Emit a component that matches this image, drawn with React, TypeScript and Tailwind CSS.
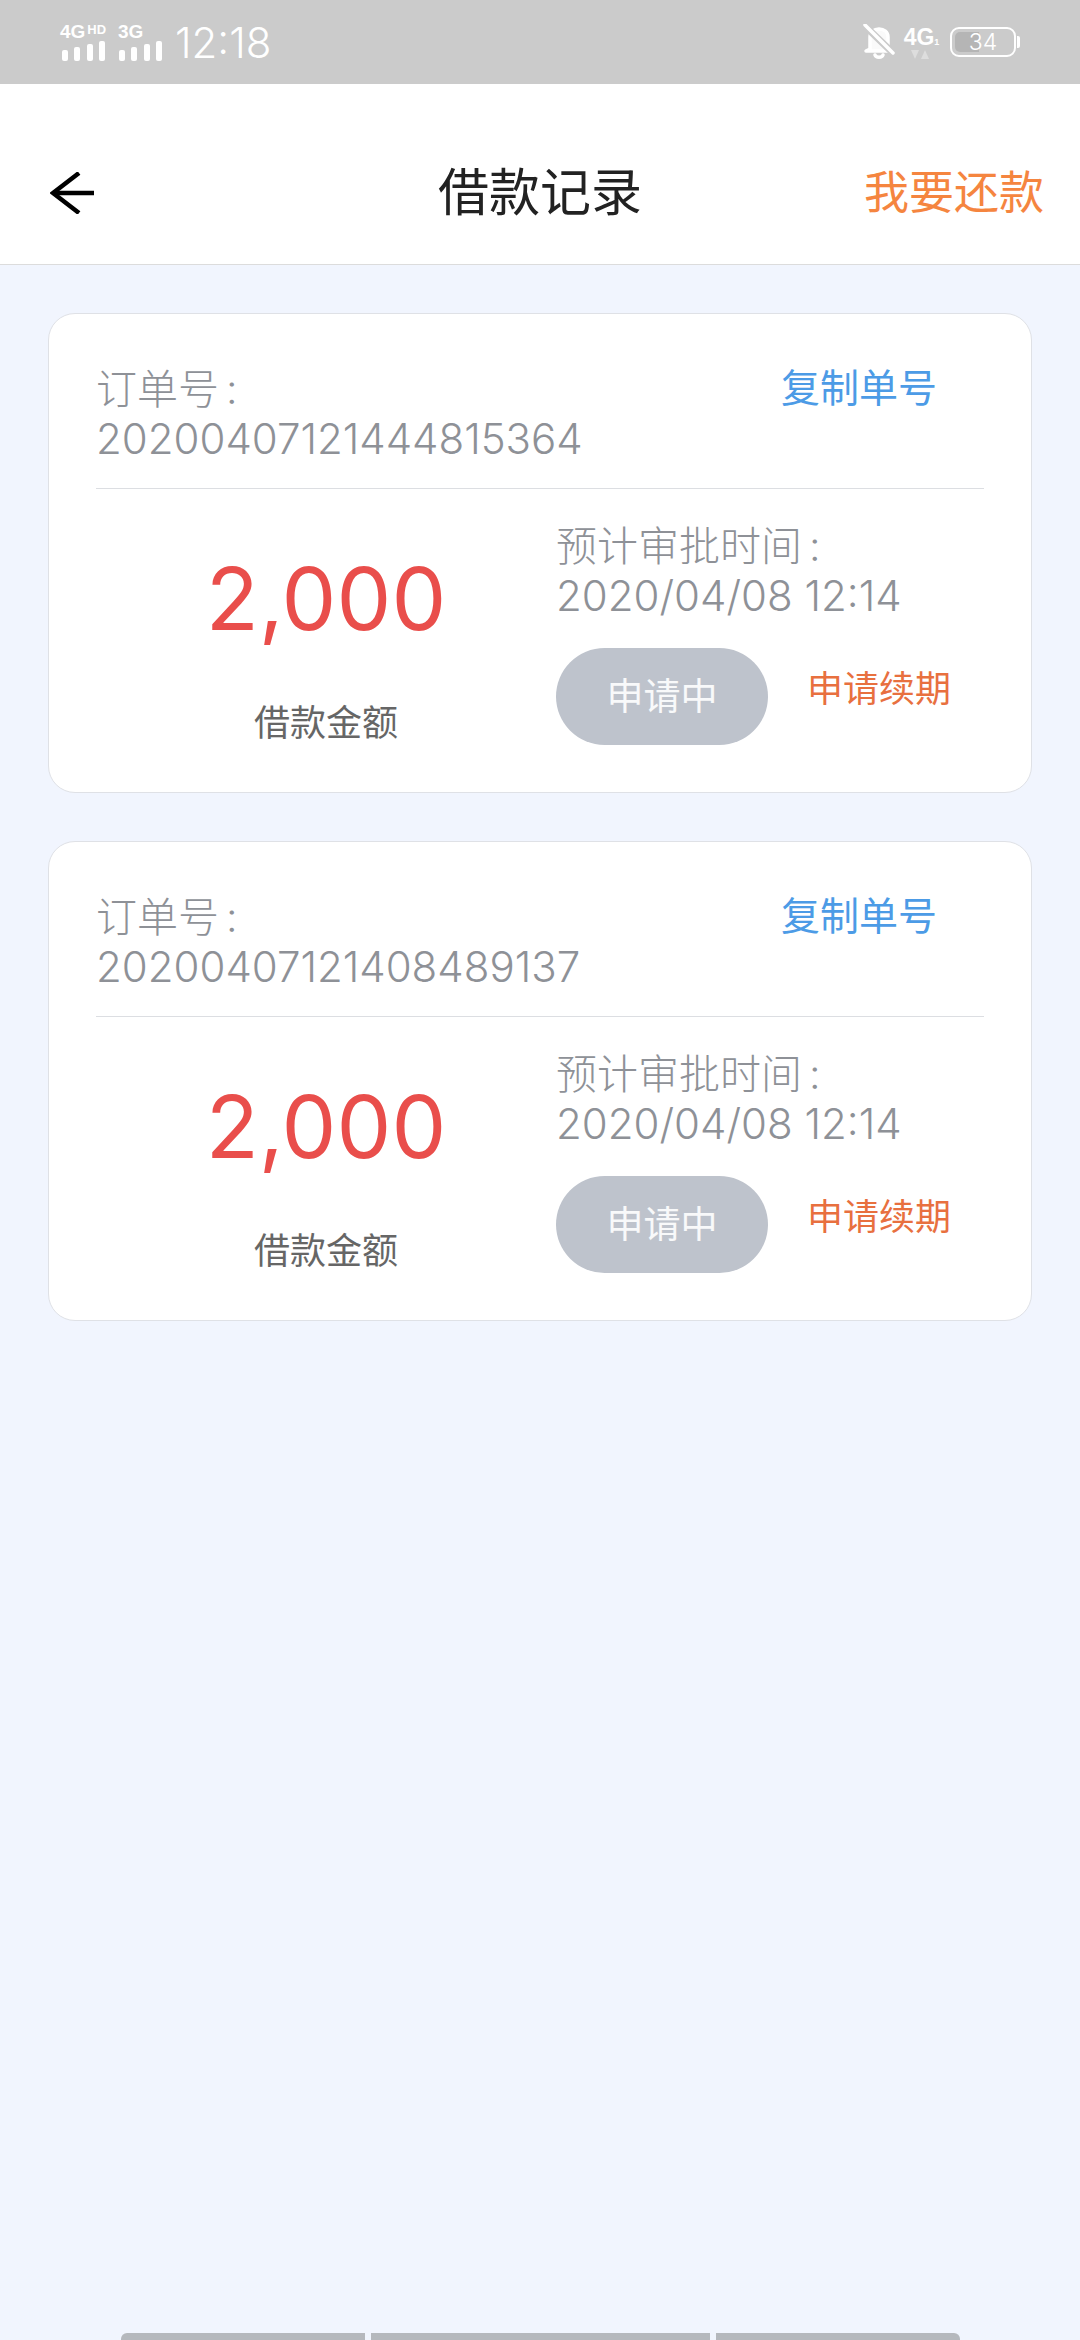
const fontStack = "font-['Inter','Noto_Sans_CJK_SC',sans-serif]"

const orders = [
  { id: '20200407121444815364', amount: '2,000', approveAt: '2020/04/08 12:14' },
  { id: '20200407121408489137', amount: '2,000', approveAt: '2020/04/08 12:14' },
]

function SignalBars() {
  return (
    <svg width="43" height="20" viewBox="0 0 43 20" fill="#fff">
      <rect x="0" y="9" width="6" height="11" rx="2" />
      <rect x="12" y="6" width="6" height="14" rx="2" />
      <rect x="25" y="3" width="6" height="17" rx="2" />
      <rect x="37" y="0" width="6" height="20" rx="2" />
    </svg>
  )
}

function StatusBar() {
  return (
    <div className="flex h-[84px] items-center justify-between bg-[#cbcbcb] pr-[60px] pl-[60px] text-white">
      <div className="flex items-center">
        <div className="flex w-[58px] flex-col items-start">
          <div className="flex h-[15px] items-start font-['Liberation_Sans',sans-serif] font-bold">
            <span className="text-[19px] leading-[15px]">4G</span>
            <span className="ml-[2px] text-[13px] leading-[11px]">HD</span>
          </div>
          <div className="mt-[2px] ml-[2px]"><SignalBars /></div>
        </div>
        <div className="flex w-[57px] flex-col items-start">
          <div className="h-[15px] font-['Liberation_Sans',sans-serif] text-[19px] leading-[15px] font-bold">3G</div>
          <div className="mt-[2px] ml-[1px]"><SignalBars /></div>
        </div>
        <span className="mt-[1px] text-[42px] leading-none font-light">12:18</span>
      </div>
      <div className="flex items-center">
        <svg width="32" height="36" viewBox="0 0 32 36" fill="none" stroke="#fff" strokeWidth="3.5" strokeLinecap="round" strokeLinejoin="round">
          <path d="M7 25V13C7 8 11 5 16 5s9 3 9 8v12l4 2H3z" fill="#fff" fillOpacity="0.9" />
          <path d="M12 31c1 3 7 3 8 0" />
          <path d="M2 2l28 27" stroke="#cbcbcb" strokeWidth="7" />
          <path d="M2 1l28 28" />
        </svg>
        <div className="ml-[10px] flex w-[33px] flex-col items-center">
          <div className="flex items-end font-['Liberation_Sans',sans-serif] font-bold">
            <span className="text-[23px] leading-[22px]">4G</span>
            <span className="text-[9px] leading-[11px]">1</span>
          </div>
          <svg className="mt-[2px] mr-[3px]" width="18" height="9" viewBox="0 0 18 9" fill="#fff" fillOpacity="0.35">
            <path d="M0 0h8L4 9z" />
            <path d="M10 9h8L14 0z" />
          </svg>
        </div>
        <div className="ml-[12px] flex items-center">
          <div className="flex h-[30px] w-[66px] items-center overflow-hidden rounded-[9px] border-[2px] border-white p-[3px]">
            <div className="flex h-full w-full items-center justify-center rounded-[5px] bg-[linear-gradient(90deg,#b5b5b5_0%,#b5b5b5_42%,transparent_42%)] text-[23px] leading-none font-light">34</div>
          </div>
          <div className="ml-[1px] h-[12px] w-[3px] rounded-r-[2px] bg-white" />
        </div>
      </div>
    </div>
  )
}

function Header() {
  return (
    <div className="grid h-[181px] grid-cols-[1fr_auto_1fr] items-center border-b border-[#dcdcdc] bg-white pt-[37px] pr-[36px] pl-[50px]">
      <svg width="44" height="42" viewBox="0 0 44 42" fill="none" stroke="#000" strokeWidth="4.5">
        <path d="M44 21H3" />
        <path d="M29 1L3 21l26 20" />
      </svg>
      <span className="mr-[14px] text-[51px] leading-none text-[#222222]">借款记录</span>
      <span className="justify-self-end text-[45px] leading-none text-[#f5853f]">我要还款</span>
    </div>
  )
}

function OrderCard({ id, amount, approveAt }: { id: string; amount: string; approveAt: string }) {
  return (
    <div className="h-[480px] rounded-[27px] border border-[#dfe1e6] bg-white px-[47px] pt-[50px]">
      <div className="flex h-[125px] items-start justify-between border-b border-[#dcdee2]">
        <div className="leading-[50px] font-light text-[#8e9197]">
          <div className="text-[41px]">订单号<span className="ml-[7px]">:</span></div>
          <div className="text-[42px]">{id}</div>
        </div>
        <span className="mr-[47px] text-[39px] leading-[48px] text-[#4c9be6]">复制单号</span>
      </div>
      <div className="flex">
        <div className="flex w-[460px] flex-col items-center">
          <span className="mt-[60px] text-[87px] leading-[100px] text-[#e94e4b]">{amount}</span>
          <span className="mt-[52px] text-[36px] leading-[44px] text-[#666666]">借款金额</span>
        </div>
        <div className="flex flex-col pt-[32px]">
          <div className="leading-[50px] font-light text-[#8e9197]">
            <div className="text-[41px]">预计审批时间<span className="ml-[7px]">:</span></div>
            <div className="text-[42px]">{approveAt}</div>
          </div>
          <div className="mt-[27px] flex items-start">
            <div className="flex h-[97px] w-[212px] items-center justify-center rounded-full bg-[#bec3cc] text-[37px] text-white/90">申请中</div>
            <span className="mt-[20px] ml-[39px] text-[36px] leading-[42px] text-[#e8703f]">申请续期</span>
          </div>
        </div>
      </div>
    </div>
  )
}

export default function App() {
  return (
    <div className={`flex min-h-[2340px] flex-col bg-[#f1f5fe] ${fontStack}`}>
      <StatusBar />
      <Header />
      <div className="flex flex-col gap-[48px] px-[48px] pt-[48px]">
        {orders.map((o) => (
          <OrderCard key={o.id} {...o} />
        ))}
      </div>
      <div className="mt-auto flex h-[7px] justify-center gap-[6px]">
        <div className="w-[244px] rounded-tl-[6px] bg-[#b5b8bd]" />
        <div className="w-[339px] bg-[#b5b8bd]" />
        <div className="w-[244px] rounded-tr-[6px] bg-[#b5b8bd]" />
      </div>
    </div>
  )
}
